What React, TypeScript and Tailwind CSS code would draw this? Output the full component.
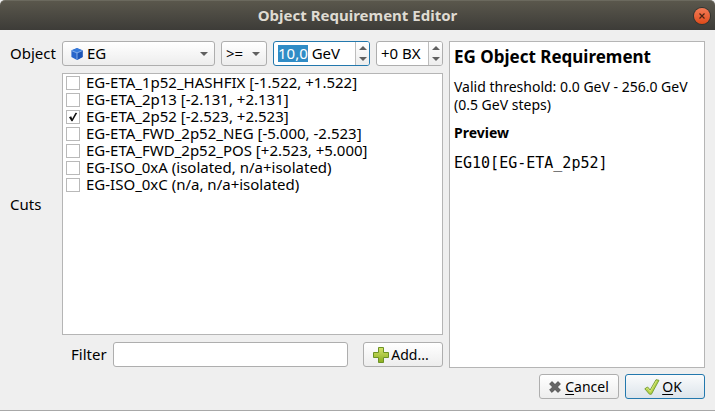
import { useEffect, useRef, useState } from "react";

const cuts = [
  { name: "EG-ETA_1p52_HASHFIX [-1.522, +1.522]", on: false },
  { name: "EG-ETA_2p13 [-2.131, +2.131]", on: false },
  { name: "EG-ETA_2p52 [-2.523, +2.523]", on: true },
  { name: "EG-ETA_FWD_2p52_NEG [-5.000, -2.523]", on: false },
  { name: "EG-ETA_FWD_2p52_POS [+2.523, +5.000]", on: false },
  { name: "EG-ISO_0xA (isolated, n/a+isolated)", on: false },
  { name: "EG-ISO_0xC (n/a, n/a+isolated)", on: false },
];

const buttonLook =
  "flex h-[25px] w-20 items-center justify-center rounded-[3px] border bg-linear-to-b text-[14px]";

function Triangle({ up = false }: { up?: boolean }) {
  return (
    <svg width="8" height="4" viewBox="0 0 8 4" fill="#606060" aria-hidden="true">
      <path d={up ? "M0 4L4 0L8 4Z" : "M0 0H8L4 4Z"} />
    </svg>
  );
}

function CubeIcon() {
  return (
    <svg width="12" height="12" viewBox="0 0 12 12" aria-hidden="true">
      <path d="M6 0L11.6 2.3V9L6 12L.4 9V2.3Z" fill="#2866cb" />
      <path d="M6 .3L11.2 2.5L6 4.8L.8 2.5Z" fill="#367bdc" />
      <path d="M6 5V12L11.6 9V2.5Z" fill="#1c55b6" />
      <path d="M.6 2.6L6 4.9L11.4 2.6M6 4.9V11.7" fill="none" stroke="#9bc0f2" strokeWidth=".8" />
    </svg>
  );
}

function Select({ label, value, icon, className }: { label: string; value: string; icon?: boolean; className: string }) {
  return (
    <div className={`relative ${className}`}>
      <select
        aria-label={label}
        className={`h-[25px] w-full appearance-none rounded-[3px] border border-[#aeaeae] bg-linear-to-b from-white to-[#ededed] outline-none ${icon ? "pl-6" : "pl-1"}`}
      >
        <option>{value}</option>
      </select>
      {icon && (
        <span className="pointer-events-none absolute top-[7px] left-[9px]">
          <CubeIcon />
        </span>
      )}
      <span className="pointer-events-none absolute inset-y-0 right-[7px] flex items-center">
        <Triangle />
      </span>
    </div>
  );
}

function SpinBox({ label, value, active, className }: { label: string; value: string; active?: boolean; className: string }) {
  const input = useRef<HTMLInputElement>(null);
  useEffect(() => {
    if (active) {
      input.current?.focus();
      input.current?.setSelectionRange(0, 4);
    }
  }, [active]);
  return (
    <div className={`flex h-[25px] overflow-hidden rounded-[3px] border bg-white ${active ? "border-[#2378ad]" : "border-[#aeaeae]"} ${className}`}>
      <input
        ref={input}
        aria-label={label}
        defaultValue={value}
        className="min-w-0 flex-1 pl-1 outline-none selection:bg-[#308cc6] selection:text-white"
      />
      <div className="flex w-[14px] flex-col border-l border-[#bdbdbd] bg-linear-to-b from-white to-[#ededed] py-px">
        <button aria-label={`Increase ${label}`} className="flex flex-1 items-center justify-center">
          <Triangle up />
        </button>
        <button aria-label={`Decrease ${label}`} className="flex flex-1 items-center justify-center">
          <Triangle />
        </button>
      </div>
    </div>
  );
}

function Cut({ name, on }: { name: string; on: boolean }) {
  const [checked, setChecked] = useState(on);
  return (
    <li>
      <label className="flex h-[17px] items-center gap-[6px] whitespace-nowrap">
        <span className="grid size-[14px] shrink-0">
          <input
            type="checkbox"
            checked={checked}
            onChange={() => setChecked(!checked)}
            className="col-start-1 row-start-1 size-[14px] appearance-none border border-[#b9b9b9] bg-white"
          />
          {checked && (
            <svg className="pointer-events-none col-start-1 row-start-1" width="14" height="14" viewBox="0 0 14 14" aria-hidden="true">
              <path d="M3 7.2L5.2 6.3L6.2 8.8L9.5 2.8L11.2 3L6.5 11.2H5.5Z" fill="#111" />
            </svg>
          )}
        </span>
        {name}
      </label>
    </li>
  );
}

export default function App() {
  return (
    <div className="flex min-h-screen flex-col border-b border-[#a8a8a8] bg-[#efefef] font-['Noto_Sans',sans-serif] text-[15px] leading-[17px] text-black">
      <header className="grid h-[30px] grid-cols-[1fr_auto_1fr] items-center rounded-t-[5px] border-t border-[#6b695e] bg-linear-to-b from-[#5a574c] to-[#3d3c38] px-[5px]">
        <h1 className="col-start-2 font-bold text-[#dfdbd2]">Object Requirement Editor</h1>
        <button
          aria-label="Close"
          className="flex size-4 items-center justify-center justify-self-end rounded-full bg-linear-to-b from-[#f37b55] to-[#df4a16] ring-1 ring-[#34332e]"
        >
          <svg width="6" height="6" viewBox="0 0 6 6" stroke="#492414" strokeWidth="1.2" aria-hidden="true">
            <path d="M.5 .5L5.5 5.5M5.5 .5L.5 5.5" />
          </svg>
        </button>
      </header>

      <main className="flex flex-1 flex-col gap-[6px] px-[10px] py-[11px]">
        <div className="flex flex-1 gap-[6px]">
          <div className="grid flex-1 grid-cols-[46px_1fr] grid-rows-[auto_1fr] gap-x-[6px] gap-y-[7px] pb-px">
            <span className="self-center">Object</span>
            <div className="flex gap-[6px]">
              <Select label="Object" value="EG" icon className="flex-1" />
              <Select label="Comparison" value="&gt;=" className="w-[46px]" />
              <SpinBox label="threshold" value="10,0 GeV" active className="w-[97px]" />
              <SpinBox label="offset" value="+0 BX" className="w-[67px]" />
            </div>
            <span className="self-center pb-8">Cuts</span>
            <div className="flex flex-col gap-[7px]">
              <ul className="flex-1 border border-[#b5b5b5] bg-white px-[3px]">
                {cuts.map((cut) => (
                  <Cut key={cut.name} {...cut} />
                ))}
              </ul>
              <div className="flex items-center pl-[9px]">
                <label htmlFor="filter">Filter</label>
                <input
                  id="filter"
                  className="mr-[15px] ml-[6px] h-[25px] min-w-0 flex-1 rounded-[3px] border border-[#aeaeae] bg-white px-1 outline-none"
                />
                <button className={`${buttonLook} gap-[2px] border-[#aeaeae] from-white to-[#ededed] pr-1`}>
                  <svg width="16" height="16" viewBox="0 0 16 16" aria-hidden="true">
                    <defs>
                      <linearGradient id="plus" x2="0" y2="1">
                        <stop stopColor="#d5e46a" />
                        <stop offset="1" stopColor="#8aad20" />
                      </linearGradient>
                    </defs>
                    <path d="M5.5 .5H10.5V5.5H15.5V10.5H10.5V15.5H5.5V10.5H.5V5.5H5.5Z" fill="url(#plus)" stroke="#6c9324" strokeLinejoin="round" />
                  </svg>
                  Add...
                </button>
              </div>
            </div>
          </div>

          <section className="w-[256px] border border-[#b5b5b5] bg-white px-1 pt-1">
            <h2 className="text-[17px] leading-[22px] font-bold">EG Object Requirement</h2>
            <p className="mt-[10px] text-[14px] leading-[18px]">
              Valid threshold: 0.0 GeV - 256.0 GeV (0.5 GeV steps)
            </p>
            <h3 className="mt-[10px] text-[14px] leading-[18px] font-bold">Preview</h3>
            <p className="mt-3 font-['DejaVu_Sans_Mono',monospace] leading-[18px]">EG10[EG-ETA_2p52]</p>
          </section>
        </div>

        <footer className="flex justify-end gap-[6px]">
          <button className={`${buttonLook} gap-1 border-[#aeaeae] from-white to-[#ededed]`}>
            <svg width="12" height="12" viewBox="0 0 12 12" aria-hidden="true">
              <path
                d="M3 .6L6 3.6L9 .6L11.4 3L8.4 6L11.4 9L9 11.4L6 8.4L3 11.4L.6 9L3.6 6L.6 3Z"
                fill="#666"
                stroke="#484848"
                strokeWidth=".8"
                strokeLinejoin="round"
              />
            </svg>
            <span>
              <span className="underline underline-offset-2">C</span>ancel
            </span>
          </button>
          <button className={`${buttonLook} gap-[2px] border-[#2378ad] from-[#fafbfc] to-[#dce4eb] pr-1`}>
            <svg width="16" height="16" viewBox="0 0 16 16" aria-hidden="true">
              <path
                d="M.8 9.8L3.6 8L6.2 11L12 .7L15 1.3L7.4 15.2H5.5Z"
                fill="#b6d449"
                stroke="#6e9830"
                strokeWidth=".9"
                strokeLinejoin="round"
              />
              <path d="M2.2 10L3.5 9.2L6.2 12.5L12.5 1.7" fill="none" stroke="#dcea8c" strokeWidth=".8" />
            </svg>
            <span>
              <span className="underline underline-offset-2">O</span>K
            </span>
          </button>
        </footer>
      </main>
    </div>
  );
}
